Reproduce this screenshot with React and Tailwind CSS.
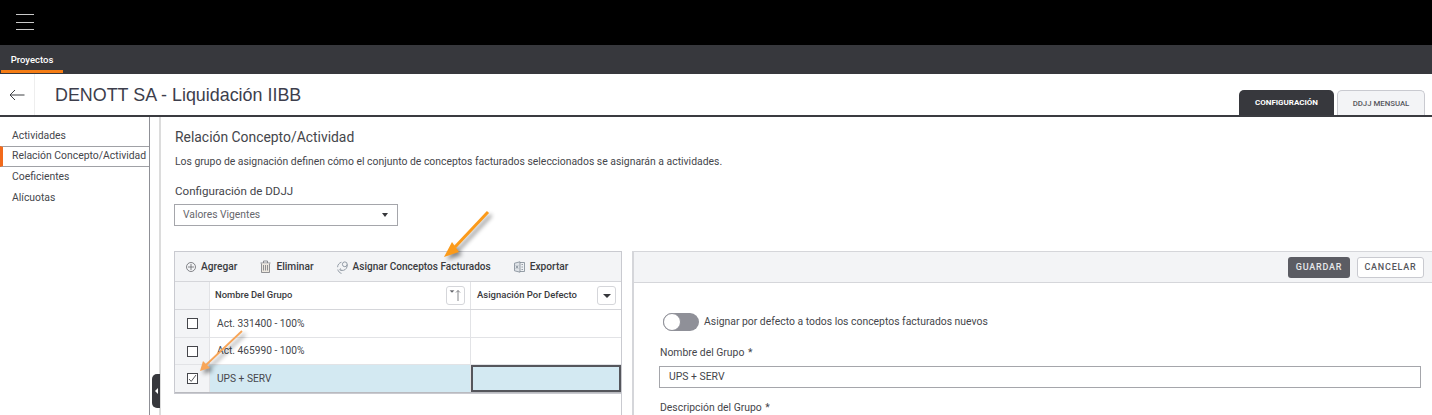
const font = "font-['Roboto','Noto_Sans',sans-serif]";

const sideItems = ["Actividades", "Relación Concepto/Actividad", "Coeficientes", "Alícuotas"];

const rows = [
	{ name: "Act. 331400 - 100%", height: "h-[28px]" },
	{ name: "Act. 465990 - 100%", height: "h-[27px]" },
	{ name: "UPS + SERV", height: "h-[28px]", selected: true },
];

const Arrow = ({ className, x1, y1, x2, y2, head, stroke = 3, color = "#fb9a1a" }) => (
	<svg className={className} viewBox="0 0 60 60" fill="none">
		<g className="drop-shadow-[3px_3px_2px_rgba(0,0,0,0.45)]">
			<line x1={x1} y1={y1} x2={x2} y2={y2} stroke={color} strokeWidth={stroke} />
			<polygon points={head} fill={color} />
		</g>
	</svg>
);

const ToolButton = ({ icon, label, textClass = "text-[10.2px]" }) => (
	<div className="flex items-center gap-[5px]">
		{icon}
		<span className={`${textClass} font-medium text-[#3a3b40]`}>{label}</span>
	</div>
);

const Checkbox = ({ checked }) => (
	<div className="w-[11px] h-[11px] border border-[#45464b] bg-white flex items-center justify-center">
		{checked && (
			<svg width="9" height="9" viewBox="0 0 9 9" fill="none">
				<path d="M1 5l2.2 2.4L8 1" stroke="#45464b" strokeWidth="0.9" />
			</svg>
		)}
	</div>
);

const App = () => {
	return (
		<div className={`${font} relative w-[1432px] h-[415px] overflow-hidden bg-white text-[#45464b]`}>
			{/* top bars */}
			<div className="h-[45px] bg-black flex items-center pl-[16px]">
				<div className="w-[18px] flex flex-col gap-[6.5px] -mt-[1px]">
					<div className="h-px bg-[#c9c9c9]" />
					<div className="h-px bg-[#c9c9c9]" />
					<div className="h-px bg-[#c9c9c9]" />
				</div>
			</div>
			<div className="h-[29px] bg-[#37383d] flex pl-px">
				<div className="w-[62px] h-[28px] pt-[5px] border-b-[3px] border-[#f57c14] flex items-center justify-center">
					<span className="text-[9.5px] font-medium text-white">Proyectos</span>
				</div>
			</div>

			{/* page header */}
			<div className="h-[43px] border-b-2 border-[#3a3b40] flex items-stretch">
				<div className="w-[35px] border-r border-[#eeeeee] flex items-center justify-center">
					<svg width="16" height="12" viewBox="0 0 16 12" fill="none">
						<path d="M15.5 6H1M6 1L1 6l5 5" stroke="#3f4045" strokeWidth="1" />
					</svg>
				</div>
				<div className="ml-[20px] pt-[2px] flex items-center text-[17.9px] text-[#3d3e4c] font-['Liberation_Sans',sans-serif]">
					DENOTT SA - Liquidación IIBB
				</div>
				<div className="ml-auto mr-[7px] flex items-end gap-[3px]">
					<div className="w-[95px] h-[25px] pt-px bg-[#37383d] rounded-t-[5px] flex items-center justify-center text-[8px] font-bold text-white">
						CONFIGURACIÓN
					</div>
					<div className="w-[88px] h-[25px] pt-px bg-[#f3f4f6] border border-b-0 border-[#c9cad0] rounded-t-[5px] flex items-center justify-center text-[7.8px] font-medium text-[#55565c]">
						DDJJ MENSUAL
					</div>
				</div>
			</div>

			<div className="flex h-[299px]">
				{/* sidebar */}
				<div className="w-[150px] border-r border-[#8f9096] pt-[8px] shrink-0">
					{sideItems.map((item, i) =>
						i === 1 ? (
							<div
								key={item}
								className="h-[21px] pb-px border-y border-l-[3px] border-y-[#a0a1a6] border-l-[#f26a1b] pl-[9px] flex items-center text-[10.4px] whitespace-nowrap"
							>
								{item}
							</div>
						) : (
							<div key={item} className={`h-[21px] pl-[12px] flex items-center text-[10.4px] ${i > 1 ? "pb-[2px]" : ""}`}>
								{item}
							</div>
						)
					)}
				</div>
				<div className="relative w-[11px] border-r-2 border-[#dcdcdc] shrink-0" />

				{/* main content */}
				<div className="flex-1 min-w-0">
					<div className="pl-[13px] h-[134px]">
						<div className="pl-px pt-[10px] text-[13.9px] leading-[20px] font-normal text-[#45464b]">Relación Concepto/Actividad</div>
						<div className="pl-px mt-[8px] text-[10.4px] leading-[14px]">
							Los grupo de asignación definen cómo el conjunto de conceptos facturados seleccionados se asignarán a actividades.
						</div>
						<div className="pl-px mt-[15px] text-[11.6px] leading-[14px]">Configuración de DDJJ</div>
						<div className="mt-[6px] w-[224px] h-[22px] border border-[#a5a6ab] flex items-center justify-between pl-[8px] pr-[9px] text-[10.3px] text-[#66676c]">
							Valores Vigentes
							<span className="w-0 h-0 border-x-[3.5px] border-x-transparent border-t-[4px] border-t-[#36373b]" />
						</div>
					</div>

					<div className="flex h-[165px] pl-[13px]">
						{/* left grid */}
						<div className="w-[448px] border-r border-[#c9cad0] shrink-0">
							<div className="border border-[#c9cad0] border-r-0">
								<div className="h-[30px] pt-px bg-[#f3f4f6] border-b border-[#d5d6da] flex items-center gap-[23px] pl-[11px]">
									<ToolButton
										label="Agregar"
										icon={
											<svg width="10" height="10" viewBox="0 0 10 10" fill="none" stroke="#66676c" strokeWidth="0.8">
												<circle cx="5" cy="5" r="4.5" />
												<path d="M5 2v6M2 5h6" />
											</svg>
										}
									/>
									<ToolButton
										label="Eliminar"
										icon={
											<svg width="11" height="13" viewBox="0 0 11 13" fill="none" stroke="#77787d" strokeWidth="0.8">
												<path d="M0.5 3h10M3.5 3V1h4v2" />
												<path d="M1.5 3.5v9h8v-9" fill="#ece7df" />
												<path d="M3.5 5v5.5M5.5 5v5.5M7.5 5v5.5" />
											</svg>
										}
									/>
									<ToolButton
										label="Asignar Conceptos Facturados"
										textClass="text-[10.05px]"
										icon={
											<svg width="11" height="13" viewBox="0 0 11 13" fill="none" stroke="#7d8893" strokeWidth="0.8">
												<path d="M4.5 1.2C2.2 1.8 0.6 3.8 0.6 6.2M0.8 8.5c0.4 1.8 1.8 3.4 3.7 3.9" />
												<circle cx="7.8" cy="3.3" r="2.4" />
												<path d="M10.2 3.5c0.3 2.8-1.2 5.2-3.7 5.8-1 0.2-2 0.1-2.8-0.3M3.5 7.4L2.8 9l1.8 0.4" />
											</svg>
										}
									/>
									<ToolButton
										label="Exportar"
										icon={
											<svg width="11" height="12" viewBox="0 0 11 12" fill="none" stroke="#7d8893" strokeWidth="0.8">
												<path d="M6 1.5h4.5v9H6" fill="#eef1f4" />
												<path d="M0.5 2.2L6 0.8v10.4L0.5 9.8z" fill="#dfe3e8" />
												<path d="M2 4.5l2 3M4 4.5l-2 3M7.5 3.5h1.5M7.5 6h1.5M7.5 8.5h1.5" />
											</svg>
										}
									/>
								</div>

								<div className="flex h-[28px] border-b border-[#d5d6da]">
									<div className="w-[35px] bg-[#f3f4f6] border-r border-[#e2e3e6]" />
									<div className="w-[261px] border-r border-[#e2e3e6] flex items-center justify-between pl-[5px] pr-[5px] text-[9.4px] font-medium text-[#3a3b40]">
										Nombre Del Grupo
										<div className="w-[19px] h-[19px] border border-[#d5d6da] rounded-[3px] flex items-center justify-center">
											<svg width="13" height="13" viewBox="0 0 13 13" fill="none" stroke="#66676c" strokeWidth="0.8">
												<path d="M9 12V1.5M7 3.5l2-2 2 2" />
												<path d="M1 1.5h4L3 3.5z" fill="#55565c" strokeWidth="0.3" />
											</svg>
										</div>
									</div>
									<div className="flex-1 flex items-center justify-between pl-[6px] pr-[5px] text-[9.5px] font-medium text-[#3a3b40]">
										Asignación Por Defecto
										<div className="w-[19px] h-[19px] border border-[#d5d6da] rounded-[3px] flex items-center justify-center">
											<span className="w-0 h-0 border-x-[4px] border-x-transparent border-t-[4px] border-t-[#36373b]" />
										</div>
									</div>
								</div>

								{rows.map((row, i) => (
									<div
										key={row.name}
										className={`flex ${row.height} ${i < rows.length - 1 ? "border-b border-[#e2e3e6]" : "border-b border-[#b9babf]"}`}
									>
										<div className="w-[35px] bg-[#f3f4f6] border-r border-[#e2e3e6] flex items-center justify-center">
											<Checkbox checked={row.selected} />
										</div>
										<div
											className={`w-[261px] border-r border-[#e2e3e6] flex items-center pl-[7px] text-[10.2px] ${row.selected ? "bg-[#d3e9f2]" : ""}`}
										>
											{row.name}
										</div>
										<div className={`flex-1 ${row.selected ? "bg-[#d3e9f2] border-2 border-[#55565c]" : ""}`} />
									</div>
								))}
							</div>
						</div>

						{/* right form */}
						<div className="ml-[10px] flex-1 min-w-0 border-l-2 border-[#d5d6da]">
							<div className="h-[32px] bg-[#f3f4f6] border-y border-[#d5d6da] flex items-center justify-end gap-[7px] pr-[8px]">
								<button className="w-[62px] h-[21px] pt-px bg-[#5b5c63] rounded-[3px] text-[9px] font-medium tracking-[0.8px] text-[#e8e8ea]">
									GUARDAR
								</button>
								<button className="w-[67px] h-[21px] pt-px bg-white border border-[#c9cad0] rounded-[3px] text-[9px] font-medium tracking-[0.8px] text-[#55565c]">
									CANCELAR
								</button>
							</div>
							<div className="pl-[25px] pr-[11px]">
								<div className="mt-[30px] ml-[4px] flex items-center gap-[5px]">
									<div className="w-[36px] h-[18px] rounded-full bg-[#8f9098] relative">
										<div className="absolute left-0 top-0 w-[18px] h-[18px] rounded-full bg-white border border-[#8f9098]" />
									</div>
									<span className="text-[10.4px]">Asignar por defecto a todos los conceptos facturados nuevos</span>
								</div>
								<div className="pl-px mt-[15px] text-[10.4px] leading-[14px]">
									Nombre del Grupo <span className="align-top ml-px">*</span>
								</div>
								<div className="mt-[6px] h-[22px] border border-[#a5a6ab] flex items-center pl-[9px] text-[10.4px]">UPS + SERV</div>
								<div className="pl-px mt-[13px] text-[10.4px] leading-[14px]">
									Descripción del Grupo <span className="align-top ml-px">*</span>
								</div>
							</div>
						</div>
					</div>
				</div>
			</div>

			{/* collapse handle */}
			<div className="absolute left-[152px] top-[374px] w-[8px] h-[34px] bg-[#37383d] rounded-l-[5px] flex items-center justify-center">
				<span className="w-0 h-0 border-y-[3px] border-y-transparent border-r-[3px] border-r-white" />
			</div>

			{/* annotation arrows */}
			<Arrow
				className="absolute left-[440px] top-[208px] w-[60px] h-[60px]"
				x1={48}
				y1={4}
				x2={15}
				y2={39}
				head="4,49 12,34 19,44"
			/>
			<Arrow
				className="absolute left-[198px] top-[328px] w-[60px] h-[60px]"
				x1={44}
				y1={3}
				x2={8}
				y2={37}
				stroke={1.8}
				color="#f7a558"
				head="2,43 5,33 12,40"
			/>
		</div>
	);
};

export default App;
